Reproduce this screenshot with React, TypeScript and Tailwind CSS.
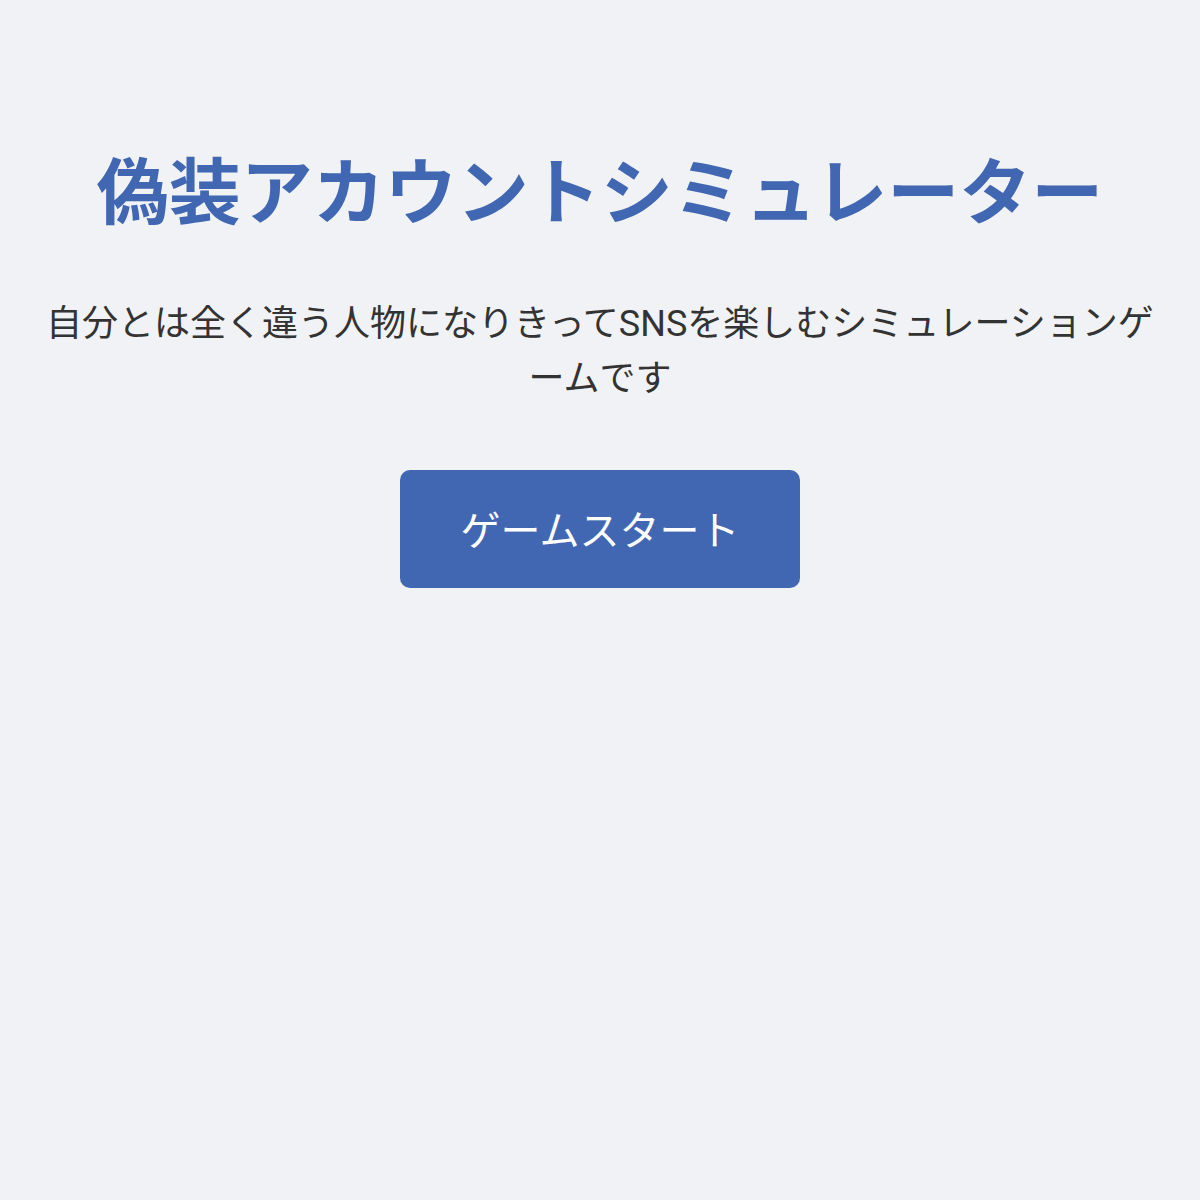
export default function App() {
  return (
    <div className="min-h-screen bg-[#f0f2f5] font-['Roboto','Noto_Sans_CJK_JP',sans-serif]">
      <div className="mx-auto px-[40px] pt-[151px] text-center">
        <h1 className="text-[72px] font-bold leading-[86px] text-[#4267b2]">偽装アカウントシミュレーター</h1>
        <p className="mt-[60px] text-[36px] leading-[55px] text-[#333333]">
          自分とは全く違う人物になりきってSNSを楽しむシミュレーションゲームです
        </p>
        <button className="mt-[63px] h-[118px] w-[400px] rounded-[10px] bg-[#4267b2] pt-[6px] text-[40px] text-white">
          ゲームスタート
        </button>
      </div>
    </div>
  )
}
